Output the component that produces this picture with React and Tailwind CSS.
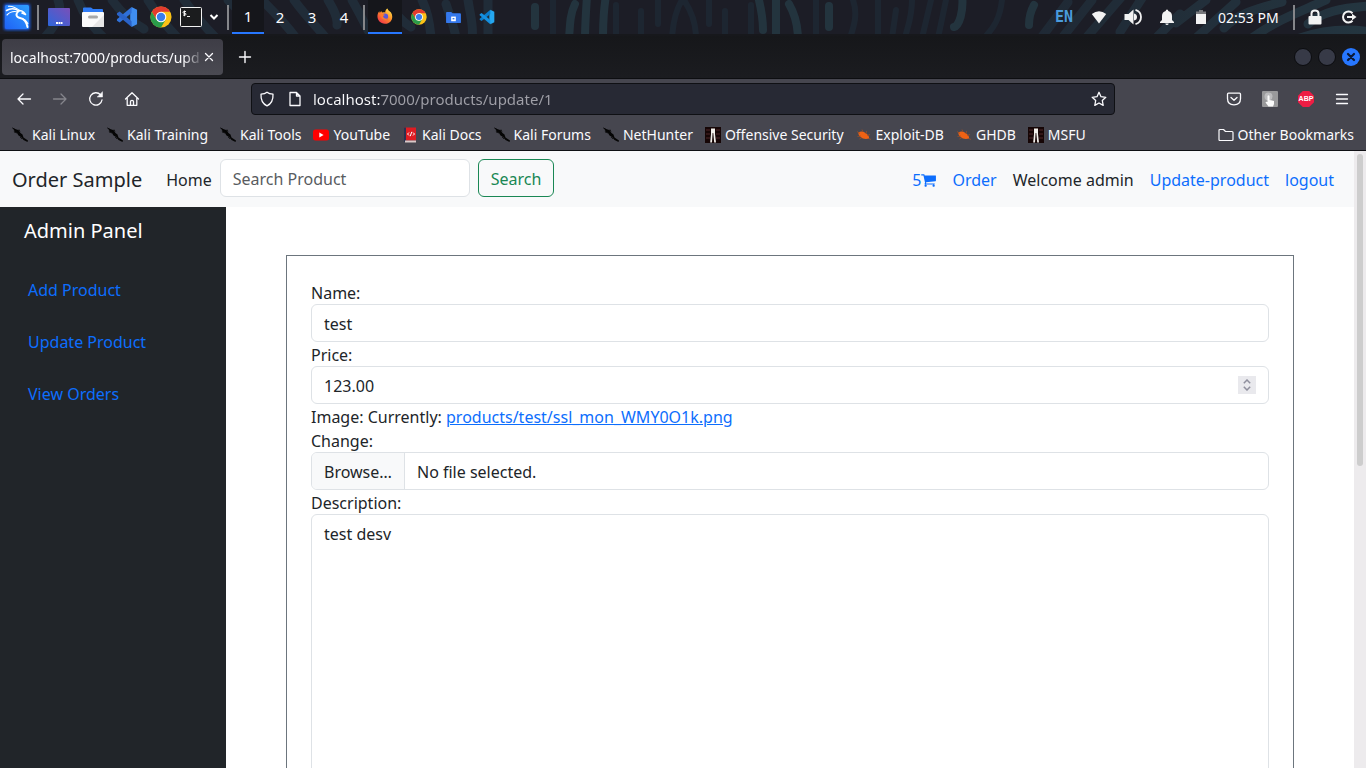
import React from "react";

/* ---------- desktop panel icons ---------- */

function KaliLogo() {
  return (
    <svg viewBox="0 0 30 30" className="h-[30px] w-[30px]" aria-hidden="true">
      <defs>
        <linearGradient id="kali" x1="0" y1="1" x2="1" y2="0">
          <stop offset="0" stopColor="#1f62f5" />
          <stop offset="1" stopColor="#2fa0ff" />
        </linearGradient>
        <filter id="glow" x="-20%" y="-20%" width="140%" height="140%">
          <feGaussianBlur stdDeviation="1.5" />
        </filter>
      </defs>
      <rect x="2" y="2" width="26" height="26" rx="2" fill="#1f62f5" filter="url(#glow)" />
      <rect x="3" y="3" width="24" height="24" rx="1.5" fill="url(#kali)" />
      <g fill="none" stroke="#fff" strokeLinecap="round" strokeLinejoin="round">
        <path d="M4.500 8.500C8 6.300 13 6.300 17 9" strokeWidth="1.500" />
        <path d="M6.500 4.300C11 4 14 5.500 18 9" strokeWidth="1.100" />
        <path d="M5 13C8 9.800 12 9 16 10" strokeWidth="1.100" />
        <path d="M15.500 8.800C18 8 21.500 9 23.500 12.500L20 11" strokeWidth="1.600" />
        <path d="M16 9.500C13.500 12.500 14 15.300 18 16C22.500 16.800 24.500 20 25.500 25" strokeWidth="1.900" />
        <path d="M20 16.500C23 17.300 24.500 19 25.800 21.500" strokeWidth="1.200" />
      </g>
    </svg>
  );
}

function DesktopIcon() {
  return (
    <svg viewBox="0 0 22 18" className="h-[18px] w-[22px]" aria-hidden="true">
      <defs>
        <linearGradient id="desk" x1="0" y1="1" x2="1" y2="0">
          <stop offset="0" stopColor="#2d67dc" />
          <stop offset="1" stopColor="#7a4fb8" />
        </linearGradient>
      </defs>
      <rect width="22" height="18" rx="1" fill="url(#desk)" />
      <path d="M8 14h2v2H8zM10.500 14h1.500v2h-1.500zM12.500 14h2v2h-2z" fill="#fff" />
    </svg>
  );
}

function FilesIcon() {
  return (
    <svg viewBox="0 0 22 20" className="h-[20px] w-[22px]" aria-hidden="true">
      <path d="M1 6V1.500Q1 0.500 2 0.500H9L11 2H20Q21 2 21 3V6z" fill="#2f7bf5" />
      <rect y="5" width="22" height="15" rx="1" fill="#fafafa" />
      <path d="M22 8V19Q22 20 21 20H10z" fill="#e6e6e6" />
      <rect x="6" y="8.500" width="10" height="3" rx="1.500" fill="#a8a8a8" />
    </svg>
  );
}

function CodeIcon({ light }) {
  return (
    <svg viewBox="0 0 24 24" className={light ? "h-4 w-4" : "h-[22px] w-[22px]"} aria-hidden="true">
      <path d="M17 1L23 4V20L17 23L15.500 17V7z" fill={light ? "#25a7f0" : "#3f8df0"} />
      <path d="M17 1V7.500L4 18L1 16V14.500z" fill={light ? "#0b7dcb" : "#2f70d8"} />
      <path d="M17 23V16.500L4 6L1 8V9.500z" fill={light ? "#1590e0" : "#2a63c8"} />
    </svg>
  );
}

function ChromeIcon({ small }) {
  return (
    <svg viewBox="0 0 24 24" className={small ? "h-4 w-4" : "h-[22px] w-[22px]"} aria-hidden="true">
      <circle cx="12" cy="12" r="11.500" fill="#fbc116" />
      <path d="M12 12V6.250H21.960A11.500 11.500 0 0 0 2.040 6.250L7 14.900z" fill="#e33b2e" />
      <path d="M2.040 6.250A11.500 11.500 0 0 0 12 23.500L17 14.900L12 17.500L7 14.900z" fill="#2a9c4a" />
      <circle cx="12" cy="12" r="5.800" fill="#fff" />
      <circle cx="12" cy="12" r="4.600" fill="#3b7ded" />
    </svg>
  );
}

function TerminalIcon() {
  return (
    <svg viewBox="0 0 22 20" className="h-[20px] w-[22px]" aria-hidden="true">
      <rect x="0.500" y="0.500" width="21" height="19" rx="1" fill="#1b1c1e" stroke="#f2f2f2" />
      <path d="M6 4.500H4Q3 4.500 3 5.400T4 6.300H5Q6 6.300 6 7.200T5 8.100H3M4.500 3.500V9.200M7 9.500H10" fill="none" stroke="#fff" strokeWidth="0.900" />
    </svg>
  );
}

function FirefoxIcon() {
  return (
    <svg viewBox="0 0 16 16" className="h-4 w-4" aria-hidden="true">
      <defs>
        <linearGradient id="fox" x1="0.900" y1="0.100" x2="0.200" y2="1">
          <stop offset="0" stopColor="#ffe14a" />
          <stop offset="0.450" stopColor="#ff8a26" />
          <stop offset="1" stopColor="#f0304c" />
        </linearGradient>
      </defs>
      <path d="M10.500 0.500C11 2.500 12.500 3 14 4.500C17 9 14.500 15.800 8 15.800C2.500 15.800-0.500 11 0.700 6.300C1 5 1.600 4 2.300 3.200L2.800 5L4.200 3L5 4.600C6.500 4 7.300 4 8.300 4.500C8 3 9 1.200 10.500 0.500z" fill="url(#fox)" />
      <circle cx="8" cy="8.700" r="3.200" fill="#5a57d8" />
      <path d="M3.300 6.500C5 5.500 6.500 6 8 7L6 8C6.500 10.500 9 11.500 11.500 10C9.500 13.500 4 12.500 3.300 6.500z" fill="#ff7b29" />
    </svg>
  );
}

function FolderTaskIcon() {
  return (
    <svg viewBox="0 0 16 14" className="h-[13px] w-[15px]" aria-hidden="true">
      <path d="M0 2Q0 1 1 1H5.500L7 2.500H15Q16 2.500 16 3.500V12Q16 13 15 13H1Q0 13 0 12z" fill="#3478ec" />
      <path d="M5.500 6H10.500V11H5.500z" fill="#fff" />
      <path d="M7 7.500H9V9H7z" fill="#3478ec" />
    </svg>
  );
}

/* ---------- browser toolbar icons ---------- */

function Line({ d, className = "h-4 w-4", width = 1.3, children }) {
  return (
    <svg viewBox="0 0 16 16" className={className} fill="none" stroke="currentColor" strokeWidth={width} strokeLinecap="round" strokeLinejoin="round" aria-hidden="true">
      <path d={d} />
      {children}
    </svg>
  );
}

function DragonMark() {
  return (
    <svg viewBox="0 0 16 16" className="h-4 w-4" aria-hidden="true">
      <path d="M0 0.500L4 2.500L6.500 3L8.500 6L10.500 7.500L11.500 10.500L16 13.500L15.500 15L11.500 13L9 10L6.500 8.500L5 6L1.500 4L2.500 3.500z" fill="#050505" />
      <path d="M0.500 1L6 4M2 5L5 6M7 2.500L8 4.500M8 10L10 12" stroke="#050505" strokeWidth="0.700" />
    </svg>
  );
}

function YouTubeMark() {
  return (
    <svg viewBox="0 0 16 16" className="h-4 w-4" aria-hidden="true">
      <rect y="2.500" width="16" height="11" rx="2.500" fill="#f00" />
      <path d="M6.300 5.600L10.600 8L6.300 10.400z" fill="#fff" />
    </svg>
  );
}

function DocsMark() {
  return (
    <svg viewBox="0 0 16 16" className="h-4 w-4" aria-hidden="true">
      <path d="M2 0.500H14V13.500H2z" fill="#df1c22" />
      <path d="M2 0.500H4V15H2z" fill="#2b3150" />
      <path d="M3 13.500H14V15.500H3z" fill="#d9c9c9" />
      <path d="M7 5.500L5.500 7L7 8.500M11 5.500L12.500 7L11 8.500M9.800 4.800L8.200 9.200" fill="none" stroke="#fff" strokeWidth="1" />
    </svg>
  );
}

function OffsecMark() {
  return (
    <svg viewBox="0 0 16 16" className="h-4 w-4" aria-hidden="true">
      <rect width="16" height="16" fill="#160606" />
      <path d="M1 3H5M1 7H5M1 11H5M11 3H15M11 7H15M11 11H15" stroke="#3d1d1e" strokeWidth="1.500" />
      <path d="M6 1.500H10V7L11 15.500H9.200L8.300 6H7.600L7 15.500H5.200L6 7z" fill="#f2efea" />
    </svg>
  );
}

function BugMark() {
  return (
    <svg viewBox="0 0 16 16" className="h-4 w-4" aria-hidden="true">
      <path d="M2.500 5.500C5 3.500 8 4.500 10 6.500C12 7.500 13.500 9.500 13 11.500C10 12.500 6.500 12 4.500 10C3 8.500 2 7 2.500 5.500z" fill="#ef6214" />
      <path d="M1 4.500L4 6.500M6 2.500L7 5M10.500 4L10 7M14 7.500L11 8.500M1.500 9.500L5 9M3.500 12L6 10.500M13 11.500L15 12.500" stroke="#a9501f" strokeWidth="0.700" />
    </svg>
  );
}

function CartIcon() {
  return (
    <svg viewBox="0 0 1664 1792" className="h-4 w-[15px]" fill="currentColor" role="img" aria-label="items in cart">
      <path d="M640 1536q0 52-38 90t-90 38-90-38-38-90 38-90 90-38 90 38 38 90zm896 0q0 52-38 90t-90 38-90-38-38-90 38-90 90-38 90 38 38 90zm128-1088v512q0 24-16.500 42.500t-40.500 21.500l-1044 122q13 60 13 70 0 16-24 64h920q26 0 45 19t19 45-19 45-45 19h-1024q-26 0-45-19t-19-45q0-11 8-31.500t16-36 21.500-40 15.500-29.500l-177-823h-204q-26 0-45-19t-19-45 19-45 45-19h256q16 0 28.500 6.500t19.500 15.500 13 24.500 8 26 5.500 29.500 4.500 26h1201q26 0 45 19t19 45z" />
    </svg>
  );
}

const bookmarks = [
  ["Kali Linux", DragonMark],
  ["Kali Training", DragonMark],
  ["Kali Tools", DragonMark],
  ["YouTube", YouTubeMark],
  ["Kali Docs", DocsMark],
  ["Kali Forums", DragonMark],
  ["NetHunter", DragonMark],
  ["Offensive Security", OffsecMark],
  ["Exploit-DB", BugMark],
  ["GHDB", BugMark],
  ["MSFU", OffsecMark],
];

/* ---------- desktop panel ---------- */

function Wallpaper() {
  return (
    <svg viewBox="0 0 1366 34" preserveAspectRatio="none" className="absolute inset-x-0 top-0 h-[34px] w-full opacity-60" aria-hidden="true">
      <defs>
        <linearGradient id="wave" x1="0" y1="0" x2="1" y2="0">
          <stop offset="0" stopColor="#22323f" />
          <stop offset="1" stopColor="#2a4652" />
        </linearGradient>
      </defs>
      <g fill="none" stroke="#243644" strokeWidth="9" strokeLinecap="round">
        <path d="M46 36C60 20 62 10 58 0M78 0C84 16 92 26 104 38M112 0C122 14 132 22 144 29M148 0C158 16 166 26 178 38M184 0C194 14 204 26 216 38" />
        <path d="M228 0C240 12 252 24 262 38M262 0C274 12 286 24 296 38M294 0C304 14 314 24 326 38M328 0C334 10 338 18 337 25M352 0C360 14 366 26 372 38" />
        <path d="M388 0C394 12 402 22 411 27M422 0C428 12 430 24 431 38M446 4C450 16 454 26 456 38M468 0C470 14 474 26 472 38M488 0V38" />
      </g>
      <g fill="none" stroke="#28444f" strokeWidth="8" strokeLinecap="round">
        <path d="M535 7V26M575 4C570 14 570 24 569 40M587-4C586 12 585 24 585 40M606-4C603 12 603 24 603 40M758-4C762 12 763 24 763 30M776-4V40M789 4C796 16 798 28 798 40M829 6V27" />
        <path d="M962-6C964 12 959 26 954 27M1034 5C1029 14 1029 20 1029 25" />
      </g>
      <g fill="none" stroke="#1f2c39" strokeWidth="6" strokeLinecap="round">
        <path d="M553 0V38M616 5V38M641 11V38M658-4V24M672 38C673 20 676 10 682 0M684 0C692 12 696 24 696 38M709-4V24M725 11V38M751 5V38M816 0V38M853 0C858 14 854 26 850 38M878-4V38M896 10L892 38M912 0C912 18 907 28 905 38M931 0L922 38M946 0L938 38M1002 0C1000 18 994 28 984 38" />
      </g>
      <g fill="none" stroke="url(#wave)" strokeWidth="9" strokeLinecap="round">
        <path d="M1041 38L1068 2M1062 38L1092 0M1086 38L1124-6M1120 32L1142-2M1156 38L1180 14M1176 23L1206 0M1196 38L1236 2M1224 28C1240 12 1260 8 1282 2M1252 38C1280 18 1300 12 1326 0M1308 24C1322 12 1340 8 1370 6M1300 38C1324 30 1346 28 1370 32" />
      </g>
    </svg>
  );
}

function Divider() {
  return (
    <span className="flex w-2 justify-center">
      <span className="h-[25px] w-[2px] bg-[#85868a]" />
    </span>
  );
}

function PanelButton({ label, className = "w-[34px]", children }) {
  return (
    <button type="button" aria-label={label} className={`flex h-[34px] shrink-0 items-center justify-center ${className}`}>
      {children}
    </button>
  );
}

function DesktopPanel() {
  return (
    <div className="relative h-9 shrink-0 overflow-hidden bg-[#1c1d26] shadow-[inset_0_-2px_0_#17181c]">
      <Wallpaper />
      <div className="relative flex h-[34px] items-center justify-between">
        <div className="flex items-center">
          <PanelButton label="Applications"><KaliLogo /></PanelButton>
          <Divider />
          <PanelButton label="Show desktop"><DesktopIcon /></PanelButton>
          <PanelButton label="Files"><FilesIcon /></PanelButton>
          <PanelButton label="Code editor"><CodeIcon /></PanelButton>
          <PanelButton label="Chrome"><ChromeIcon /></PanelButton>
          <PanelButton label="Terminal" className="w-[26px]"><TerminalIcon /></PanelButton>
          <PanelButton label="More launchers" className="w-5">
            <svg viewBox="0 0 10 8" className="h-2 w-[10px]" fill="none" stroke="#fff" strokeWidth="2" aria-hidden="true"><path d="M1.500 2L5 5.500L8.500 2" /></svg>
          </PanelButton>
          <Divider />
          <button type="button" className="h-[34px] w-8 border-b-2 border-[#2777ff] bg-[#15161b]">1</button>
          <button type="button" className="h-[34px] w-8">2</button>
          <button type="button" className="h-[34px] w-8">3</button>
          <button type="button" className="h-[34px] w-8">4</button>
          <Divider />
          <PanelButton label="Firefox window" className="w-[34px] border-b-2 border-[#2777ff] bg-[#15161b]"><FirefoxIcon /></PanelButton>
          <PanelButton label="Chrome window"><ChromeIcon small /></PanelButton>
          <PanelButton label="Files window"><FolderTaskIcon /></PanelButton>
          <PanelButton label="Editor window"><CodeIcon light /></PanelButton>
        </div>
        <div className="flex items-center">
          <span className="w-9 text-center font-['DejaVu_Sans_Mono',monospace] text-[15px] font-bold text-[#4a9bdc]">EN</span>
          <PanelButton label="Network">
            <svg viewBox="0 0 16 16" className="h-4 w-4" fill="#f2f2f2" aria-hidden="true"><path d="M8 14.500L0.800 5Q8-0.500 15.200 5z" /></svg>
          </PanelButton>
          <PanelButton label="Volume">
            <svg viewBox="0 0 18 18" className="h-[18px] w-[18px]" aria-hidden="true">
              <path d="M0.500 6H4.500L9.500 1.500V16.500L4.500 12H0.500z" fill="#f2f2f2" />
              <path d="M10 5.500Q13 6 13 9T10 12.500z" fill="#f2f2f2" />
              <path d="M11.500 1.800Q17 3.500 17 9T11.500 16.200" fill="none" stroke="#f2f2f2" strokeWidth="1.800" />
            </svg>
          </PanelButton>
          <PanelButton label="Notifications">
            <svg viewBox="0 0 16 16" className="h-4 w-4" fill="#f2f2f2" aria-hidden="true"><path d="M8 0.500Q9.300 0.500 9.300 2Q13 3 13 7V11L15 13V14H1V13L3 11V7Q3 3 6.700 2Q6.700 0.500 8 0.500zM6.300 14.500H9.700Q9.500 16 8 16T6.300 14.500z" /></svg>
          </PanelButton>
          <PanelButton label="Battery">
            <svg viewBox="0 0 10 14" className="h-[14px] w-[10px]" aria-hidden="true"><path d="M3 0H7V1.500H10V4H0V1.500H3z" fill="#77787c" /><path d="M0 4H10V14H0z" fill="#f2f2f2" /></svg>
          </PanelButton>
          <span className="w-[72px] text-[14px]">02:53 PM</span>
          <Divider />
          <PanelButton label="Lock screen">
            <svg viewBox="0 0 14 16" className="h-4 w-[14px]" aria-hidden="true"><rect x="0.500" y="7" width="13" height="8.500" rx="1" fill="#f2f2f2" /><path d="M3.500 8V4.500Q3.500 1.500 7 1.500T10.500 4.500V8" fill="none" stroke="#f2f2f2" strokeWidth="2" /></svg>
          </PanelButton>
          <PanelButton label="Log out">
            <svg viewBox="0 0 16 16" className="h-4 w-4" fill="none" stroke="#f2f2f2" strokeWidth="2" aria-hidden="true"><path d="M11.500 4.200A5.500 5.500 0 1 0 11.500 11.800M6 8H12" /><path d="M11 4.800L15.500 8L11 11.200z" fill="#f2f2f2" stroke="none" /></svg>
          </PanelButton>
        </div>
      </div>
    </div>
  );
}

/* ---------- browser chrome ---------- */

function TabBar() {
  return (
    <div className="flex h-[43px] shrink-0 items-center justify-between border-b border-[#0d0e11] bg-linear-to-b from-[#16171a] to-[#1b1c20] pr-1.5 pl-0.5">
      <div className="flex items-center">
        <div className="flex h-9 w-[221px] items-center rounded bg-linear-to-b from-[#3e3d46] to-[#4a4a52] px-2">
          <span className="flex-1 overflow-hidden mask-r-from-90% mask-r-to-100% text-[14px] whitespace-nowrap">localhost:7000/products/upd</span>
          <button type="button" aria-label="Close tab" className="flex w-3 shrink-0 justify-center">
            <Line d="M4.500 4.500L11.500 11.500M11.500 4.500L4.500 11.500" className="h-4 w-4 shrink-0" />
          </button>
        </div>
        <button type="button" aria-label="New tab" className="flex w-[43px] justify-center">
          <Line d="M8 2.500V13.500M2.500 8H13.500" width={1.4} />
        </button>
      </div>
      <div className="flex items-center gap-1.5">
        <button type="button" aria-label="Minimize" className="h-[18px] w-[18px] rounded-full border border-[#0b0c0f] bg-[#373a47]" />
        <button type="button" aria-label="Maximize" className="h-[18px] w-[18px] rounded-full border border-[#0b0c0f] bg-[#373a47]" />
        <button type="button" aria-label="Close window" className="flex h-[18px] w-[18px] items-center justify-center rounded-full bg-[#2777ff] text-[#0b1a38]">
          <Line d="M5 5L11 11M11 5L5 11" width={2.2} />
        </button>
      </div>
    </div>
  );
}

function ToolButton({ label, className = "", children }) {
  return (
    <button type="button" aria-label={label} className={`flex h-8 w-9 items-center justify-center ${className}`}>
      {children}
    </button>
  );
}

function NavBar() {
  return (
    <div className="flex h-10 shrink-0 items-center px-1.5">
      <div className="flex flex-1">
        <ToolButton label="Back"><Line d="M14.500 8H2M7 3L2 8L7 13" /></ToolButton>
        <ToolButton label="Forward" className="text-[#85858c]"><Line d="M1.500 8H14M9 3L14 8L9 13" /></ToolButton>
        <ToolButton label="Reload">
          <Line d="M14 9A6.200 6.200 0 1 1 12.500 3.800"><path d="M14.500 1V6H9.500z" fill="currentColor" strokeWidth="0.500" /></Line>
        </ToolButton>
        <ToolButton label="Home"><Line d="M1.500 8L8 1.800L14.500 8M3.200 7V14.300H12.800V7M6.500 14V10.500Q6.500 9.300 8 9.300T9.500 10.500V14" /></ToolButton>
      </div>
      <div className="flex h-8 w-full max-w-[864px] items-center rounded border border-[#0f1014] bg-[#272934] px-[7px]">
        <Line className="h-4 w-4 shrink-0" d="M8 1.200C9.800 2.600 12 3 14 3.200C14.300 8.500 12.500 12.700 8 14.800C3.500 12.700 1.700 8.500 2 3.200C4 3 6.200 2.600 8 1.200z" />
        <Line className="mr-2.5 ml-3 h-4 w-4 shrink-0" d="M3 1.500H9.500L13 5V14.500H3zM9.500 1.500V5H13" />
        <input
          aria-label="Address"
          defaultValue="localhost:7000/products/update/1"
          className="min-w-0 flex-1 bg-linear-to-r from-[#fbfbfe] from-[67px] to-[#a0a0a8] to-[67px] bg-clip-text text-[15px] text-transparent caret-white outline-none"
        />
        <button type="button" aria-label="Bookmark this page">
          <Line d="M8 1.300L10 5.700L14.800 6.300L11.300 9.500L12.200 14.400L8 12L3.800 14.400L4.700 9.500L1.200 6.300L6 5.700z" />
        </button>
      </div>
      <div className="flex flex-1 justify-end">
        <ToolButton label="Pocket"><Line d="M2.500 2.200H13.500Q14.500 2.200 14.500 3.200V7.500Q14.500 13.800 8 13.800T1.500 7.500V3.200Q1.500 2.200 2.500 2.200zM5 6.500L8 9.300L11 6.500" /></ToolButton>
        <ToolButton label="Click extension">
          <svg viewBox="0 0 16 16" className="h-4 w-4" aria-hidden="true">
            <rect width="16" height="16" rx="1" fill="#99999b" />
            <circle cx="6.500" cy="5.500" r="4" fill="#bcbcbe" />
            <path d="M5.500 5Q6.500 3.500 7.500 5V9L12 10V13L11 15.500H6.500L3.500 11.500Q4 10.500 5.500 11z" fill="#fafafa" />
          </svg>
        </ToolButton>
        <ToolButton label="ABP">
          <span className="flex h-4 w-4 items-center justify-center bg-[#ee1d44] font-['Liberation_Sans',sans-serif] text-[7px] font-bold text-white [clip-path:polygon(30%_0,70%_0,100%_30%,100%_70%,70%_100%,30%_100%,0_70%,0_30%)]">ABP</span>
        </ToolButton>
        <ToolButton label="Menu"><Line d="M2.500 3.500H13.500M2.500 8H13.500M2.500 12.500H13.500" /></ToolButton>
      </div>
    </div>
  );
}

function BookmarksBar() {
  return (
    <div className="flex h-8 shrink-0 items-center justify-between border-b border-[#0f1014] px-3 text-[14px]">
      <div className="flex items-center gap-3">
        {bookmarks.map(([name, Mark]) => (
          <a key={name} href="#" className="flex items-center gap-1 whitespace-nowrap">
            <Mark />
            {name}
          </a>
        ))}
      </div>
      <button type="button" className="flex items-center gap-1 whitespace-nowrap">
        <Line d="M1 3.500Q1 2.500 2 2.500H5.500L7.500 4.500H14Q15 4.500 15 5.500V12.500Q15 13.500 14 13.500H2Q1 13.500 1 12.500z" width={1.2} />
        Other Bookmarks
      </button>
    </div>
  );
}

/* ---------- web page ---------- */

const field = "h-[38px] w-full rounded-md border border-[#dee2e6] bg-white px-3 pt-0.5 outline-none";
const caption = "h-6 leading-[26px]";

function SiteHeader() {
  return (
    <header className="flex h-14 items-start justify-between bg-[#f8f9fa] px-3 py-2">
      <div className="flex items-start">
        <a href="#" className="mr-4 text-xl leading-[42px]">Order Sample</a>
        <a href="#" className="px-2 leading-[42px]">Home</a>
        <form className="flex gap-2" onSubmit={(e) => e.preventDefault()}>
          <input type="search" aria-label="Search Product" placeholder="Search Product" className="h-[38px] w-[250px] rounded-md border border-[#dee2e6] bg-white px-3 pt-0.5 outline-none placeholder:text-[#595c5f]" />
          <button type="submit" className="h-[38px] rounded-md border border-[#198754] px-3 pt-0.5 text-[#198754]">Search</button>
        </form>
      </div>
      <nav className="flex gap-4 px-2 leading-[42px] whitespace-nowrap text-[#0d6efd]">
        <a href="#" className="flex items-center">5<CartIcon /></a>
        <a href="#">Order</a>
        <span className="text-[#212529]">Welcome admin</span>
        <a href="#">Update-product</a>
        <a href="#">logout</a>
      </nav>
    </header>
  );
}

function Sidebar() {
  return (
    <aside className="w-[226px] shrink-0 bg-[#212529] px-6 py-2">
      <h2 className="text-xl leading-8 text-white">Admin Panel</h2>
      <nav className="mt-[31px] flex flex-col gap-7 px-1 text-[#0d6efd]">
        <a href="#">Add Product</a>
        <a href="#">Update Product</a>
        <a href="#">View Orders</a>
      </nav>
    </aside>
  );
}

function ProductForm() {
  return (
    <form className="flex flex-col border border-[#6c757d] p-6" onSubmit={(e) => e.preventDefault()}>
      <label htmlFor="name" className={caption}>Name:</label>
      <input id="name" defaultValue="test" className={field} />
      <label htmlFor="price" className={caption}>Price:</label>
      <div className="flex h-[38px] items-center rounded-md border border-[#dee2e6] px-3">
        <input id="price" type="number" step="0.01" defaultValue="123.00" className="min-w-0 flex-1 appearance-none pt-0.5 outline-none [&::-webkit-inner-spin-button]:appearance-none" />
        <span className="flex h-[18px] w-[18px] flex-col items-center justify-center gap-0.5 bg-[#e9e9ed] text-[#8f8f9d]">
          <button type="button" aria-label="Increase price">
            <svg viewBox="0 0 8 5" className="h-[5px] w-2" fill="none" stroke="currentColor" strokeWidth="1.500" aria-hidden="true"><path d="M0.800 4.200L4 1L7.200 4.200" /></svg>
          </button>
          <button type="button" aria-label="Decrease price">
            <svg viewBox="0 0 8 5" className="h-[5px] w-2" fill="none" stroke="currentColor" strokeWidth="1.500" aria-hidden="true"><path d="M0.800 0.800L4 4L7.200 0.800" /></svg>
          </button>
        </span>
      </div>
      <p className={caption}>Image: Currently: <a href="#" className="text-[#0d6efd] underline">products/test/ssl_mon_WMY0O1k.png</a></p>
      <label htmlFor="image" className={caption}>Change:</label>
      <label className="flex h-[38px] cursor-pointer items-stretch overflow-hidden rounded-md border border-[#dee2e6] leading-[38px]">
        <input id="image" type="file" className="sr-only" />
        <span className="border-r border-[#dee2e6] bg-[#f8f9fa] px-3">Browse…</span>
        <span className="px-3">No file selected.</span>
      </label>
      <label htmlFor="description" className={caption}>Description:</label>
      <textarea id="description" rows={15} defaultValue="test desv" className="block w-full resize-none rounded-md border border-[#dee2e6] px-3 py-[7px] outline-none" />
    </form>
  );
}

export default function App() {
  return (
    <div className="flex h-screen flex-col overflow-hidden bg-[#46464f] font-['Noto_Sans',sans-serif] text-[15px] text-[#fbfbfe]">
      <DesktopPanel />
      <TabBar />
      <NavBar />
      <BookmarksBar />
      <div className="flex min-h-0 flex-1 bg-white text-base text-[#212529]">
        <div className="flex min-w-0 flex-1 flex-col overflow-hidden">
          <SiteHeader />
          <div className="flex flex-1">
            <Sidebar />
            <main className="min-w-0 flex-1 px-[60px] pt-12">
              <ProductForm />
            </main>
          </div>
        </div>
        <div className="w-3 shrink-0 bg-[#edebed] px-[3px] py-[3px]" aria-hidden="true">
          <div className="h-[51%] rounded-full bg-[#cdcdcd]" />
        </div>
      </div>
    </div>
  );
}
